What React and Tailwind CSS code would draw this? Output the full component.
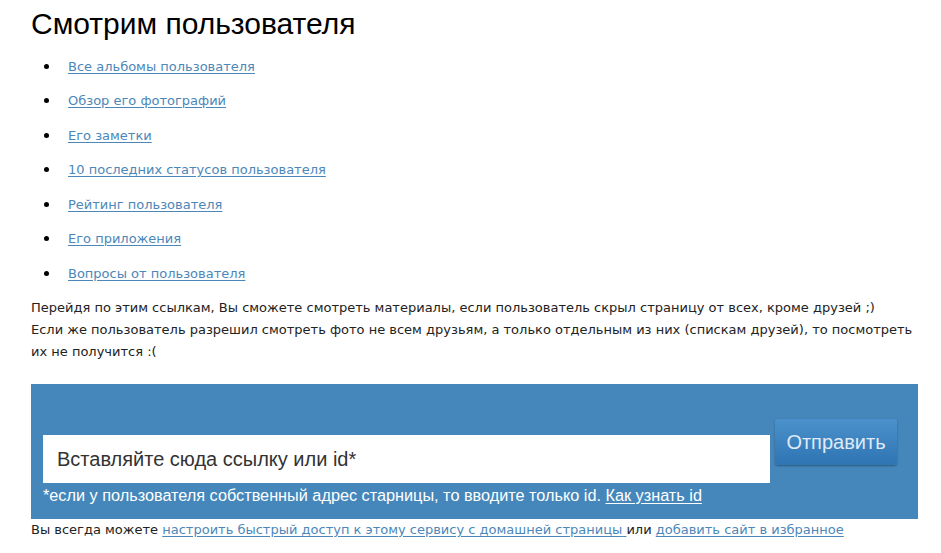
import React from 'react';

const links = [
  'Все альбомы пользователя',
  'Обзор его фотографий',
  'Его заметки',
  '10 последних статусов пользователя',
  'Рейтинг пользователя',
  'Его приложения',
  'Вопросы от пользователя',
];

const tahoma = "font-['DejaVu_Sans',sans-serif]";
const arial = "font-['Liberation_Sans',Arial,sans-serif]";

const App = () => {
  return (
    <div className="w-[941px] h-[553px] bg-white px-[31px] overflow-hidden">
      <h1 className={`${arial} pt-[4px] text-[30px] leading-[40px] text-black`}>
        Смотрим пользователя
      </h1>

      <ul className={`${tahoma} mt-[5px] text-[13px]`}>
        {links.map((link) => (
          <li key={link} className="flex h-[34.5px] items-center">
            <span className="ml-[13px] mr-[19px] h-[5px] w-[5px] rounded-full bg-black" />
            <a href="#" className="text-[#4c87b9] underline underline-offset-2">
              {link}
            </a>
          </li>
        ))}
      </ul>

      <div className={`${tahoma} mt-[6px] whitespace-nowrap text-[13px] leading-[22px] text-[#222]`}>
        <p>Перейдя по этим ссылкам, Вы сможете смотреть материалы, если пользователь скрыл страницу от всех, кроме друзей ;)</p>
        <p>Если же пользователь разрешил смотреть фото не всем друзьям, а только отдельным из них (спискам друзей), то посмотреть</p>
        <p>их не получится :(</p>
      </div>

      <div className="mt-[21px] h-[135px] w-[887px] bg-[#4587bb] pl-[12px] pr-[21px] pt-[35px]">
        <div className="flex items-start gap-[5px]">
          <div className={`${arial} mt-[16px] flex h-[48px] w-[727px] items-center bg-white pl-[14px] text-[20px] text-[#333]`}>
            Вставляйте сюда ссылку или id*
          </div>
          <button className={`${arial} h-[46px] w-[122px] rounded-[3px] bg-gradient-to-b from-[#4b92cc] to-[#2f74b3] text-[20px] text-[#dfeaf4] shadow-[0_1px_2px_rgba(0,0,0,0.35)]`}>
            Отправить
          </button>
        </div>
        <p className={`${arial} mt-[3px] text-[16.25px] leading-[18px] text-white`}>
          *если у пользователя собственный адрес старницы, то вводите только id.{' '}
          <a href="#" className="underline underline-offset-2">Как узнать id</a>
        </p>
      </div>

      <p className={`${tahoma} text-[13px] leading-[22px] text-[#222]`}>
        Вы всегда можете{' '}
        <a href="#" className="text-[#4c87b9] underline underline-offset-2">
          настроить быстрый доступ к этому сервису с домашней страницы{' '}
        </a>
        или{' '}
        <a href="#" className="text-[#4c87b9] underline underline-offset-2">
          добавить сайт в избранное
        </a>
      </p>
    </div>
  );
};

export default App;
